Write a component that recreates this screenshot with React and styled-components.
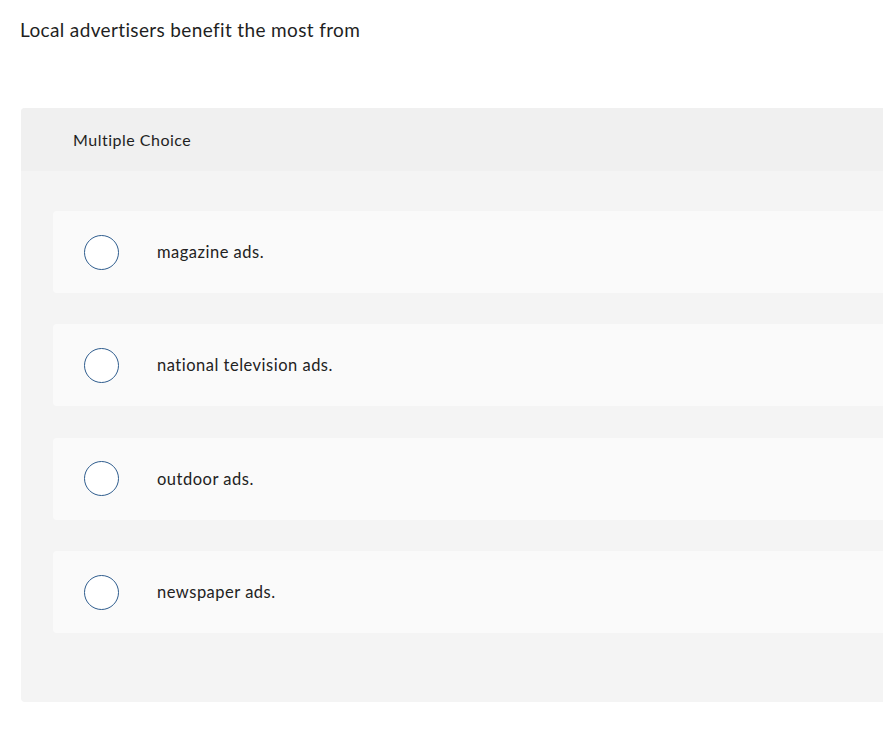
import styled, { createGlobalStyle } from 'styled-components';

const GlobalStyle = createGlobalStyle`
  body {
    margin: 0;
    background: #fff;
    overflow: hidden;
    font-family: Lato, "Open Sans", sans-serif;
    color: #222;
  }
`;

const Page = styled.div`
  padding: 17px 0 0 20px;
`;

const Question = styled.p`
  margin: 0;
  font-size: 19px;
  line-height: 26px;
  letter-spacing: 0.36px;
  color: #1f1f1f;
`;

const Card = styled.section`
  margin-top: 65px;
  margin-left: 1px;
  width: 900px;
  background: #f4f4f4;
  border-radius: 4px;
  overflow: hidden;
`;

const CardHeader = styled.div`
  height: 63px;
  display: flex;
  align-items: center;
  padding-left: 52px;
  background: #f0f0f0;
  font-size: 16px;
  letter-spacing: 0.5px;
  color: #1f1f1f;
`;

const Options = styled.div`
  display: flex;
  flex-direction: column;
  gap: 31.4px;
  padding: 40px 0 69px 32px;
`;

const Option = styled.label`
  height: 82px;
  display: flex;
  align-items: center;
  padding-left: 31px;
  background: #fafafa;
  border-radius: 4px;
  cursor: pointer;
`;

const Radio = styled.span`
  box-sizing: border-box;
  width: 35px;
  height: 35px;
  border-radius: 50%;
  border: 1.5px solid #2f5d8e;
  background: #fff;
  flex-shrink: 0;
`;

const OptionText = styled.span`
  margin-left: 38px;
  font-size: 16.5px;
  letter-spacing: 0.5px;
  color: #222;
`;

const choices = [
  'magazine ads.',
  'national television ads.',
  'outdoor ads.',
  'newspaper ads.',
];

const App = () => (
  <>
    <GlobalStyle />
    <Page>
      <Question>Local advertisers benefit the most from</Question>
      <Card>
        <CardHeader>Multiple Choice</CardHeader>
        <Options>
          {choices.map((c) => (
            <Option key={c}>
              <Radio />
              <OptionText>{c}</OptionText>
            </Option>
          ))}
        </Options>
      </Card>
    </Page>
  </>
);

export default App;
